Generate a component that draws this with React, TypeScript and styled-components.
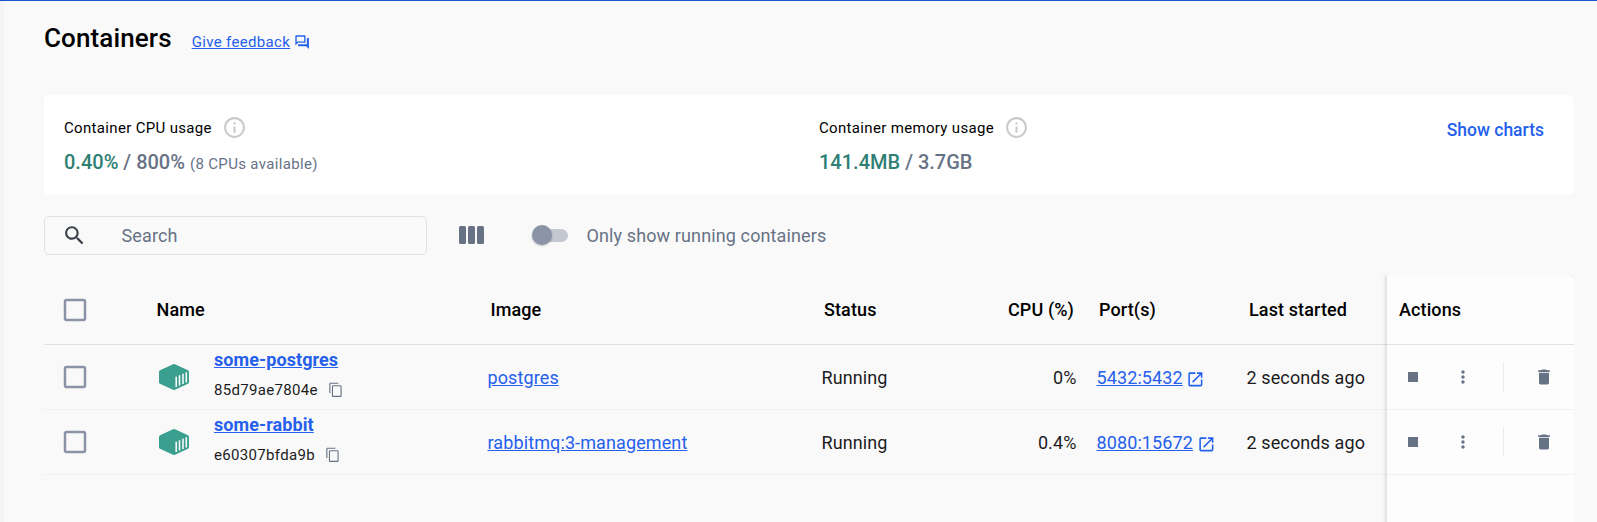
import React from "react";
import styled, { createGlobalStyle } from "styled-components";

const Global = createGlobalStyle`
  * { box-sizing: border-box; }
  html, body { margin: 0; padding: 0; background: #f9f9f9; overflow: hidden; }
  body { font-family: Roboto, "Liberation Sans", sans-serif; color: #000; }
`;

const Shell = styled.div`
  border-top: 1px solid #1654d0;
  background: #f9f9f9;
`;

const Page = styled.div`
  display: flex;
  flex-direction: column;
  height: 521px;
  padding: 0 23px 0 40px;
  border-left: 4px solid #f4f4f6;
  overflow: hidden;
`;

const Header = styled.header`
  display: flex;
  align-items: flex-start;
  height: 94px;
  flex: none;
`;

const Title = styled.h1`
  margin: 21px 20px 0 0;
  font-size: 26px;
  line-height: 32px;
  font-weight: 500;
  letter-spacing: 0.12px;
`;

const Feedback = styled.a`
  display: flex;
  align-items: center;
  gap: 4px;
  margin-top: 31px;
  color: #2560ec;
  font-size: 15px;
  line-height: 20px;
  letter-spacing: 0.34px;
  & > span { text-decoration: underline; }
`;

const Svg = styled.svg`
  display: block;
  flex: none;
  fill: currentColor;
`;

const Card = styled.section`
  display: flex;
  flex: none;
  height: 100px;
  padding: 0 30px 0 20px;
  border-radius: 5px;
  background: #fff;
`;

const Stat = styled.div<{ $w?: number }>`
  width: ${(p) => (p.$w ? p.$w + "px" : "auto")};
  flex: none;
  padding-top: 20px;
`;

const StatLabel = styled.div`
  display: flex;
  align-items: center;
  gap: 10px;
  height: 25px;
  font-size: 15px;
  letter-spacing: 0.33px;
  & > svg { color: #cacaca; }
`;

const StatValue = styled.div`
  margin-top: 10px;
  font-size: 20px;
  line-height: 25px;
  font-weight: 500;
  color: #677285;
  white-space: pre;
  & > b { font-weight: 500; color: #2e7f74; }
  & > small { font-size: 15px; font-weight: 400; letter-spacing: 0.34px; }
`;

const ShowCharts = styled.a`
  margin: 22px 0 0 auto;
  font-size: 17.5px;
  line-height: 26px;
  font-weight: 500;
  color: #2560ec;
`;

const Toolbar = styled.div`
  display: flex;
  align-items: center;
  flex: none;
  height: 39px;
  margin-top: 21px;
  color: #677285;
  font-size: 18px;
  letter-spacing: 0.12px;
`;

const SearchBox = styled.div`
  display: flex;
  align-items: center;
  width: 383px;
  height: 39px;
  padding-left: 17px;
  gap: 34.5px;
  border: 1px solid #e1e2e6;
  border-radius: 5px;
  & > svg { color: #393f49; }
`;

const Columns = styled.div`
  display: flex;
  gap: 2px;
  margin: 0 0 1px 32px;
  & > i { width: 7px; height: 18px; border-radius: 1.5px; background: #677285; }
`;

const Switch = styled.div`
  display: flex;
  align-items: center;
  width: 33px;
  height: 13px;
  margin: 0 18.5px 1px 51px;
  border-radius: 7px;
  background: #c4c8d1;
  &::before {
    content: "";
    width: 20px;
    height: 20px;
    flex: none;
    margin-left: -3px;
    border-radius: 50%;
    background: #8b93a7;
    box-shadow: 0 1px 2px rgba(0, 0, 0, 0.25);
  }
`;

const Table = styled.div`
  display: flex;
  flex: none;
  height: 260px;
  margin-top: 20px;
`;

const Main = styled.div`
  width: 1343px;
  flex: none;
`;

const Side = styled.div`
  width: 187px;
  flex: none;
  border-radius: 0 5px 0 0;
  background: #fdfdfd;
  box-shadow: -1px 0 4px rgba(0, 0, 0, 0.17);
  clip-path: inset(0 0 0 -8px);
`;

const HeadRow = styled.div`
  display: flex;
  align-items: center;
  height: 70px;
  border-bottom: 1px solid #dfe0e2;
  font-size: 18px;
  font-weight: 500;
  letter-spacing: 0.11px;
`;

const Row = styled.div`
  display: flex;
  align-items: center;
  height: 65px;
  border-bottom: 1px solid #f1f1f2;
  font-size: 18px;
  letter-spacing: 0.11px;
  color: #1c1c1e;
`;

const Cell = styled.div<{ $w: number; $pl?: number; $right?: boolean }>`
  display: flex;
  align-items: center;
  flex: none;
  width: ${(p) => p.$w}px;
  padding-left: ${(p) => p.$pl || 0}px;
  justify-content: ${(p) => (p.$right ? "flex-end" : "flex-start")};
  white-space: nowrap;
`;

const Link = styled.a`
  color: #2560ec;
  text-decoration: underline;
`;

const PortLink = styled.a`
  display: flex;
  align-items: center;
  height: 21px;
  gap: 4px;
  color: #2560ec;
  & > span { text-decoration: underline; }
  & > svg { margin: 4px 0 0 -0.5px; }
`;

const NameCell = styled.div`
  display: flex;
  flex-direction: column;
  align-items: flex-start;
  width: 273px;
  height: 64px;
  flex: none;
`;

const Name = styled(Link)`
  margin-top: 3px;
  font-weight: 700;
  line-height: 24px;
  letter-spacing: 0.08px;
`;

const Id = styled.div`
  display: flex;
  align-items: center;
  gap: 10px;
  height: 20px;
  margin-top: 8px;
  font-size: 15px;
  letter-spacing: 0.32px;
  & > svg { color: #677285; }
`;

const Actions = styled.div`
  display: flex;
  align-items: center;
  height: 64px;
  padding-left: 16px;
  color: #677285;
`;

const Divider = styled.div`
  width: 1px;
  height: 30px;
  margin: 0 30px;
  background: #ededef;
`;

const MoreButton = styled.span`
  margin-left: 30px;
`;

const icons = {
  search:
    "M15.5 14h-.79l-.28-.27C15.41 12.59 16 11.11 16 9.5 16 5.91 13.09 3 9.5 3S3 5.91 3 9.5 5.91 16 9.5 16c1.61 0 3.09-.59 4.23-1.57l.27.28v.79l5 4.99L20.49 19l-4.99-5zm-6 0C7.01 14 5 11.99 5 9.5S7.01 5 9.5 5 14 7.01 14 9.5 11.99 14 9.5 14z",
  info: "M11 7h2v2h-2zm0 4h2v6h-2zm1-9C6.48 2 2 6.48 2 12s4.48 10 10 10 10-4.48 10-10S17.52 2 12 2zm0 18c-4.41 0-8-3.59-8-8s3.59-8 8-8 8 3.59 8 8-3.59 8-8 8z",
  forum:
    "M15 4v7H5.17L4 12.17V4h11m1-2H3c-.55 0-1 .45-1 1v14l4-4h10c.55 0 1-.45 1-1V3c0-.55-.45-1-1-1zm5 4h-2v9H6v2c0 .55.45 1 1 1h11l4 4V7c0-.55-.45-1-1-1z",
  open: "M19 19H5V5h7V3H5c-1.11 0-2 .9-2 2v14c0 1.1.89 2 2 2h14c1.1 0 2-.9 2-2v-7h-2v7zM14 3v2h3.59l-9.83 9.83 1.41 1.41L19 6.41V10h2V3h-7z",
  copy: "M16 1H4c-1.1 0-2 .9-2 2v14h1.7V2.7H16V1zm3 4H8c-1.1 0-2 .9-2 2v14c0 1.1.9 2 2 2h11c1.1 0 2-.9 2-2V7c0-1.1-.9-2-2-2zm.3 16.3H7.7V6.7h11.6v14.6z",
  box: "M19 5v14H5V5h14m0-2H5c-1.1 0-2 .9-2 2v14c0 1.1.9 2 2 2h14c1.1 0 2-.9 2-2V5c0-1.1-.9-2-2-2z",
  stop: "M6 6h12v12H6z",
  more: "M12 8c1.1 0 2-.9 2-2s-.9-2-2-2-2 .9-2 2 .9 2 2 2zm0 2c-1.1 0-2 .9-2 2s.9 2 2 2 2-.9 2-2-.9-2-2-2zm0 6c-1.1 0-2 .9-2 2s.9 2 2 2 2-.9 2-2-.9-2-2-2z",
  trash: "M6 19c0 1.1.9 2 2 2h8c1.1 0 2-.9 2-2V7H6v12zM19 4h-3.5l-1-1h-5l-1 1H5v2h14V4z",
};

function Icon({ name, size }: { name: keyof typeof icons; size: number }) {
  return (
    <Svg width={size} height={size} viewBox="0 0 24 24">
      <path d={icons[name]} />
    </Svg>
  );
}

const CheckCell = styled.div<{ $w: number }>`
  width: ${(p) => p.$w}px;
  flex: none;
  padding-left: 16px;
  color: #8b93a7;
`;

const LogoCell = styled.div`
  width: 55px;
  flex: none;
`;

function ContainerLogo() {
  return (
    <Svg width={30} height={26} viewBox="0 0 30 26">
      <path fill="#3a9f8e" d="M14 .3a3 3 0 0 1 2 0L29 6.3q1 .5 1 1.5v10.4q0 1-1 1.5L16 25.7a3 3 0 0 1-2 0L1 19.7q-1-.5-1-1.5V7.8q0-1 1-1.5z" />
      <path stroke="#f9f9f9" strokeWidth="1.6" d="M17.2 12.7V23M20.5 11.2V21.5M24 9.7V20M27.3 8.2V18.6" />
    </Svg>
  );
}

const rows = [
  { name: "some-postgres", id: "85d79ae7804e", image: "postgres", cpu: "0%", port: "5432:5432" },
  { name: "some-rabbit", id: "e60307bfda9b", image: "rabbitmq:3-management", cpu: "0.4%", port: "8080:15672" },
];

export default function App() {
  return (
    <Shell>
      <Global />
      <Page>
        <Header>
          <Title>Containers</Title>
          <Feedback>
            <span>Give feedback</span>
            <Icon name="forum" size={16.25} />
          </Feedback>
        </Header>
        <Card>
          <Stat $w={755}>
            <StatLabel>Container CPU usage<Icon name="info" size={25} /></StatLabel>
            <StatValue><b>0.40%</b> / 800% <small>(8 CPUs available)</small></StatValue>
          </Stat>
          <Stat>
            <StatLabel>Container memory usage<Icon name="info" size={25} /></StatLabel>
            <StatValue><b>141.4MB</b> / 3.7GB</StatValue>
          </Stat>
          <ShowCharts>Show charts</ShowCharts>
        </Card>
        <Toolbar>
          <SearchBox><Icon name="search" size={25} />Search</SearchBox>
          <Columns><i /><i /><i /></Columns>
          <Switch />
          Only show running containers
        </Toolbar>
        <Table>
          <Main>
            <HeadRow>
              <CheckCell $w={112.5}><Icon name="box" size={30} /></CheckCell>
              <Cell $w={334}>Name</Cell>
              <Cell $w={333.5}>Image</Cell>
              <Cell $w={181}>Status</Cell>
              <Cell $w={69} $right>CPU (%)</Cell>
              <Cell $w={175} $pl={25}>Port(s)</Cell>
              <Cell $w={130}>Last started</Cell>
            </HeadRow>
            {rows.map((r) => (
              <Row key={r.id}>
                <CheckCell $w={115}><Icon name="box" size={30} /></CheckCell>
                <LogoCell><ContainerLogo /></LogoCell>
                <NameCell>
                  <Name>{r.name}</Name>
                  <Id>{r.id}<Icon name="copy" size={15.6} /></Id>
                </NameCell>
                <Cell $w={334.5} $pl={0.5}><Link>{r.image}</Link></Cell>
                <Cell $w={181}>Running</Cell>
                <Cell $w={74} $right>{r.cpu}</Cell>
                <Cell $w={170} $pl={20}>
                  <PortLink><span>{r.port}</span><Icon name="open" size={18.75} /></PortLink>
                </Cell>
                <Cell $w={130}>2 seconds ago</Cell>
              </Row>
            ))}
          </Main>
          <Side>
            <HeadRow><Cell $w={180} $pl={12}>Actions</Cell></HeadRow>
            {rows.map((r) => (
              <Row key={r.id}>
                <Actions>
                  <Icon name="stop" size={20} />
                  <MoreButton><Icon name="more" size={20} /></MoreButton>
                  <Divider />
                  <Icon name="trash" size={20} />
                </Actions>
              </Row>
            ))}
          </Side>
        </Table>
      </Page>
    </Shell>
  );
}
